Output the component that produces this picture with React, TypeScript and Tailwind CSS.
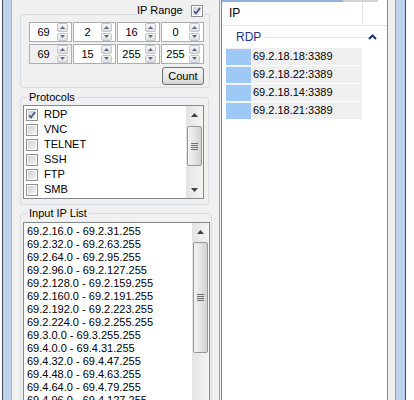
import React from "react";

function SpinArrow({ up }: { up?: boolean }) {
  return (
    <svg width="5" height="3" viewBox="0 0 5 3">
      <path d={up ? "M0 3L2.5 0L5 3Z" : "M0 0L2.5 3L5 0Z"} fill="#56698c" />
    </svg>
  );
}

function Spin() {
  return (
    <div className="flex flex-col w-[11px] h-full gap-px">
      <div className="flex-1 flex items-center justify-center border border-[#c3c7cc] rounded-[2px] bg-gradient-to-b from-[#f6f6f6] to-[#dedede]">
        <SpinArrow up />
      </div>
      <div className="flex-1 flex items-center justify-center border border-[#c3c7cc] rounded-[2px] bg-gradient-to-b from-[#f6f6f6] to-[#dedede]">
        <SpinArrow />
      </div>
    </div>
  );
}

function NumBox({ value, grey }: { value: string; grey?: boolean }) {
  return (
    <div
      className={
        grey
          ? "w-[43px] h-full border border-[#abadb3] bg-[#f0f0f0] flex pr-[3px]"
          : "w-[43px] h-full border border-[#abadb3] bg-white flex pr-[3px]"
      }
    >
      <div className="flex-1 flex items-center justify-center">{value}</div>
      <Spin />
    </div>
  );
}

function CheckBox({ checked }: { checked?: boolean }) {
  return (
    <div className="w-[12px] h-[12px] border border-[#8e8f8f] bg-white p-px shrink-0">
      <div className="w-full h-full bg-gradient-to-br from-[#cdd0d5] to-[#f4f4f4] flex items-center justify-center">
        {checked && (
          <svg width="8" height="8" viewBox="0 0 8 8">
            <path d="M1 4.2L3 6.5L7 1" stroke="#3b4f86" strokeWidth="1.6" fill="none" />
          </svg>
        )}
      </div>
    </div>
  );
}

function ScrollArrow({ up }: { up?: boolean }) {
  return (
    <svg width="7" height="4" viewBox="0 0 7 4">
      <path d={up ? "M0 4L3.5 0L7 4Z" : "M0 0L3.5 4L7 0Z"} fill="#404040" />
    </svg>
  );
}

function VScroll({ thumbTop, thumbH }: { thumbTop: number; thumbH: number }) {
  return (
    <div className="w-[17px] h-full flex flex-col bg-gradient-to-r from-[#e3e3e3] to-[#f4f4f4]">
      <div className="h-[17px] flex items-center justify-center shrink-0">
        <ScrollArrow up />
      </div>
      <div
        className="mx-px rounded-[2px] border border-[#979797] bg-gradient-to-r from-[#f3f3f3] via-[#e4e4e4] to-[#d2d2d2] flex flex-col items-center justify-center gap-px shrink-0"
        style={{ marginTop: thumbTop - 17, height: thumbH }}
      >
        <div className="w-[7px] h-px bg-[#6e6e6e]" />
        <div className="w-[7px] h-px bg-[#6e6e6e]" />
        <div className="w-[7px] h-px bg-[#6e6e6e]" />
        <div className="w-[7px] h-px bg-[#6e6e6e]" />
      </div>
      <div className="flex-1" />
      <div className="h-[17px] flex items-center justify-center shrink-0">
        <ScrollArrow />
      </div>
    </div>
  );
}

const protocols = [
  { name: "RDP", checked: true },
  { name: "VNC" },
  { name: "TELNET" },
  { name: "SSH" },
  { name: "FTP" },
  { name: "SMB" },
];

const ranges = [
  "69.2.16.0 - 69.2.31.255",
  "69.2.32.0 - 69.2.63.255",
  "69.2.64.0 - 69.2.95.255",
  "69.2.96.0 - 69.2.127.255",
  "69.2.128.0 - 69.2.159.255",
  "69.2.160.0 - 69.2.191.255",
  "69.2.192.0 - 69.2.223.255",
  "69.2.224.0 - 69.2.255.255",
  "69.3.0.0 - 69.3.255.255",
  "69.4.0.0 - 69.4.31.255",
  "69.4.32.0 - 69.4.47.255",
  "69.4.48.0 - 69.4.63.255",
  "69.4.64.0 - 69.4.79.255",
  "69.4.96.0 - 69.4.127.255",
];

const hosts = ["69.2.18.18:3389", "69.2.18.22:3389", "69.2.18.14:3389", "69.2.18.21:3389"];

export default function App() {
  return (
    <div className="w-[414px] h-[400px] overflow-hidden bg-white flex text-[11px] leading-[13px] text-black [font-family:'Liberation_Sans',Arial,sans-serif]">
      {/* left window frame */}
      <div className="w-[2px] bg-white" />
      <div className="w-px bg-[#3f4b59]" />
      <div className="w-[8px] bg-[#bfd4ec]" />
      <div className="w-px bg-[#9fb3cb]" />

      <div className="flex-1 bg-[#f0f0f0] flex">
        {/* left panel */}
        <div className="w-[206px] relative flex flex-col pl-[8px] pt-[14px] overflow-hidden">
          <div className="absolute top-[4px] left-[125px] h-[13px] flex items-center gap-[8px] bg-[#f0f0f0]">
            <span>IP Range</span>
            <CheckBox checked />
          </div>

          <div className="shrink-0 w-[190px] h-[74px] border border-[#d5dfe5] rounded-[3px] pt-[7px] pl-[8px] pr-[5px] flex flex-col">
            <div className="h-[20px] flex gap-px">
              <NumBox value="69" />
              <NumBox value="2" />
              <NumBox value="16" />
              <NumBox value="0" />
            </div>
            <div className="h-[20px] flex gap-px mt-[2px]">
              <NumBox value="69" grey />
              <NumBox value="15" />
              <NumBox value="255" />
              <NumBox value="255" />
            </div>
            <div className="flex justify-end mt-[3px]">
              <button className="w-[42px] h-[18px] border border-[#707070] rounded-[3px] bg-gradient-to-b from-[#f2f2f2] via-[#ebebeb] to-[#d6d6d6] flex items-center justify-center">
                Count
              </button>
            </div>
          </div>

          <div className="shrink-0 relative w-[189px] h-[108px] mt-[9px] border border-[#d5dfe5] rounded-[3px] pt-[7px] pl-[2px]">
            <span className="absolute top-[-7px] left-[6px] px-[2px] bg-[#f0f0f0]">Protocols</span>
            <div className="w-[181px] h-[94px] border border-[#828790] bg-white flex">
              <div className="flex-1 flex flex-col pl-[2px] pt-[1px]">
                {protocols.map((p) => (
                  <div key={p.name} className="h-[15px] flex items-center gap-[6px]">
                    <CheckBox checked={p.checked} />
                    <span>{p.name}</span>
                  </div>
                ))}
              </div>
              <VScroll thumbTop={20} thumbH={40} />
            </div>
          </div>

          <div className="shrink-0 relative w-[192px] h-[240px] mt-[8px] border border-[#d5dfe5] rounded-[3px] pt-[8px] pl-[2px]">
            <span className="absolute top-[-7px] left-[6px] px-[2px] bg-[#f0f0f0]">Input IP List</span>
            <div className="w-[187px] h-[220px] border border-[#828790] bg-white flex">
              <div className="flex-1 flex flex-col pl-[3px] pt-[2px]">
                {ranges.map((r) => (
                  <div key={r} className="h-[13px] whitespace-nowrap">
                    {r}
                  </div>
                ))}
              </div>
              <VScroll thumbTop={19} thumbH={111} />
            </div>
          </div>
        </div>

        {/* right panel */}
        <div className="flex-1 flex pl-px">
          <div className="w-px bg-[#a0a0a0]" />
          <div className="w-px" />
          <div className="w-[167px] h-full border-x border-[#828790] bg-white flex flex-col">
            <div className="h-[2px] flex">
              <div className="w-[121px] bg-[#8fb1dc]" />
              <div className="w-[35px] bg-[#d4d4d4]" />
            </div>
            <div className="h-[24px] flex border-b border-[#e5e5e5]">
              <div className="w-[141px] border-r border-[#e5e5e5] pl-[7px] flex items-center text-[12px]">IP</div>
            </div>
            <div className="h-[22px] flex items-center pl-[14px] pr-[10px]">
              <span className="text-[#1e3287] text-[12px]">RDP</span>
              <div className="flex-1 h-px bg-[#e2e2e2] ml-[4px] mr-[2px]" />
              <svg width="9" height="6" viewBox="0 0 9 6">
                <path d="M1 5L4.5 1.5L8 5" stroke="#1e3287" strokeWidth="2" fill="none" />
              </svg>
            </div>
            <div className="flex flex-col gap-px pl-[4px]">
              {hosts.map((h) => (
                <div key={h} className="w-[136px] h-[17px] bg-[#efefef] flex items-center">
                  <div className="w-[25px] h-[16px] bg-[#9ec8f6]" />
                  <span className="ml-[2px]">{h}</span>
                </div>
              ))}
            </div>
          </div>
          <div className="flex-1" />
        </div>
      </div>

      {/* right window frame */}
      <div className="w-px bg-[#a0a0a0]" />
      <div className="w-[9px] bg-[#bfd4ec]" />
      <div className="w-px bg-[#3f4b59]" />
      <div className="w-[8px] bg-white" />
    </div>
  );
}
